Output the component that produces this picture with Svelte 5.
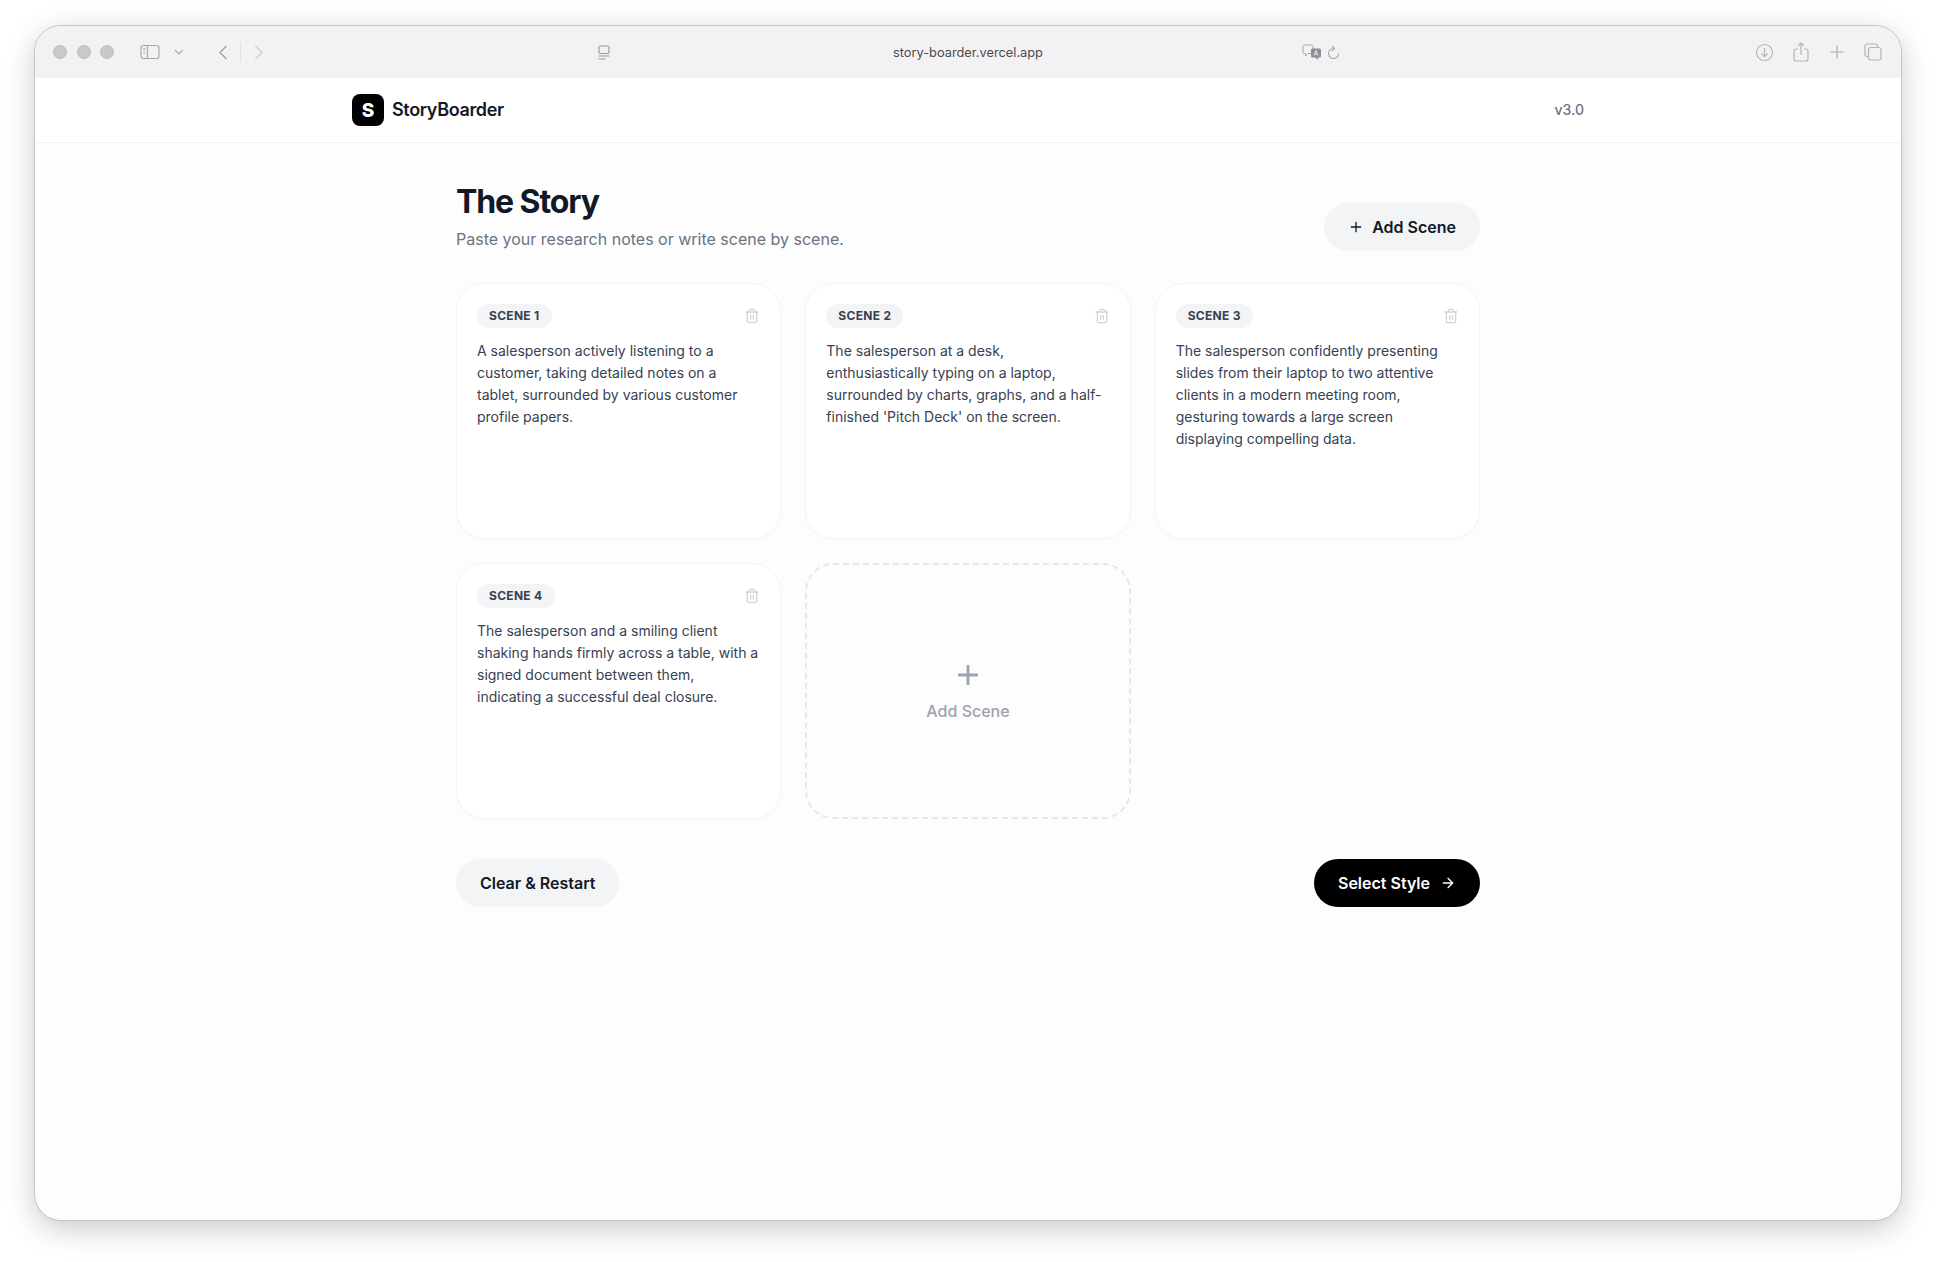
<script>
  const scenes = [
    { n: 1, text: 'A salesperson actively listening to a customer, taking detailed notes on a tablet, surrounded by various customer profile papers.' },
    { n: 2, text: "The salesperson at a desk, enthusiastically typing on a laptop, surrounded by charts, graphs, and a half-finished 'Pitch Deck' on the screen." },
    { n: 3, text: 'The salesperson confidently presenting slides from their laptop to two attentive clients in a modern meeting room, gesturing towards a large screen displaying compelling data.' },
    { n: 4, text: 'The salesperson and a smiling client shaking hands firmly across a table, with a signed document between them, indicating a successful deal closure.' }
  ];
</script>

<div class="screen">
  <div class="window">
    <div class="toolbar">
      <div class="left-tools">
        <div class="lights"><span></span><span></span><span></span></div>
        <svg class="sidebar-icon" width="20" height="16" viewBox="0 0 20 16" fill="none" stroke="#a9a9ac" stroke-width="1.2">
          <rect x="1" y="1.5" width="18" height="13" rx="2.5" />
          <path d="M7.5 1.5v13" />
          <path d="M3.2 4.5h2M3.2 6.8h2M3.2 9.1h2" stroke-width="1" />
        </svg>
        <svg class="chevron" width="10" height="7" viewBox="0 0 10 7" fill="none" stroke="#adadb0" stroke-width="1.2"><path d="M1 1l4 4 4-4" /></svg>
        <svg class="back" width="10" height="15" viewBox="0 0 10 15" fill="none" stroke="#a2a2a5" stroke-width="1.4"><path d="M8.5 1L2 7.5 8.5 14" /></svg>
        <span class="nav-divider"></span>
        <svg class="forward" width="10" height="15" viewBox="0 0 10 15" fill="none" stroke="#cfcfd2" stroke-width="1.4"><path d="M1.5 1L8 7.5 1.5 14" /></svg>
      </div>

      <div class="address">
        <svg width="12" height="15" viewBox="0 0 12 15" fill="none" stroke="#98989b" stroke-width="1.1">
          <rect x="1" y="1" width="10" height="7.5" rx="1.5" />
          <path d="M0.5 11h11M0.5 14h7" />
        </svg>
        <span class="url">story-boarder.vercel.app</span>
        <div class="address-right">
          <svg width="20" height="16" viewBox="0 0 20 16">
            <path d="M2.5 1h7A1.5 1.5 0 0 1 11 2.5V8a1.5 1.5 0 0 1-1.5 1.5H6L3.5 12V9.500h-1A1.500 1.500 0 0 1 1 8V2.500A1.500 1.500 0 0 1 2.500 1z" fill="none" stroke="#a9a9ac" stroke-width="1" />
            <path d="M10.500 4.500h7A1.500 1.500 0 0 1 19 6v6a1.500 1.500 0 0 1-1.500 1.500H16V16l-2.500-2.500h-3A1.500 1.500 0 0 1 9 12V6a1.500 1.500 0 0 1 1.500-1.500z" fill="#8e8e92" />
            <path d="M12 11.500l2-5 2 5M12.800 10h2.400" fill="none" stroke="#f2f2f4" stroke-width="0.9" />
          </svg>
          <svg width="13" height="15" viewBox="0 0 13 15" fill="none" stroke="#a9a9ac" stroke-width="1.1">
            <path d="M6.500 3.500a5 5 0 1 0 5 5" />
            <path d="M5 1l2.500 2.500L5 6" />
          </svg>
        </div>
      </div>

      <div class="right-tools">
        <svg width="19" height="19" viewBox="0 0 19 19" fill="none" stroke="#b4b4b7" stroke-width="1.2">
          <circle cx="9.500" cy="9.500" r="8" />
          <path d="M9.500 5v8.500M6.200 10.300l3.300 3.300 3.300-3.300" />
        </svg>
        <svg class="share" width="16" height="20" viewBox="0 0 16 20" fill="none" stroke="#b4b4b7" stroke-width="1.2">
          <path d="M5 7H3a2 2 0 0 0-2 2v8a2 2 0 0 0 2 2h10a2 2 0 0 0 2-2V9a2 2 0 0 0-2-2h-2" />
          <path d="M8 13V1M5 3.800L8 1l3 2.800" />
        </svg>
        <svg width="14" height="14" viewBox="0 0 14 14" fill="none" stroke="#a9a9ac" stroke-width="1.2"><path d="M7 .5v13M.5 7h13" /></svg>
        <svg width="18" height="18" viewBox="0 0 18 18" fill="none" stroke="#b4b4b7" stroke-width="1.2">
          <path d="M4 13.500H3A2 2 0 0 1 1 11.500V3a2 2 0 0 1 2-2h8.500a2 2 0 0 1 2 2v1" />
          <rect x="4.500" y="4.500" width="12.500" height="12.500" rx="2.500" />
        </svg>
      </div>
    </div>

    <div class="page">
      <header class="app-header">
        <div class="brand">
          <span class="logo">S</span>
          <span class="brand-name">StoryBoarder</span>
        </div>
        <span class="version">v3.0</span>
      </header>

      <main>
        <div class="head">
          <div>
            <h1>The Story</h1>
            <p class="sub">Paste your research notes or write scene by scene.</p>
          </div>
          <button class="btn btn-light" type="button">
            <svg width="16" height="16" viewBox="0 0 24 24" fill="none" stroke="currentColor" stroke-width="2" stroke-linecap="round" stroke-linejoin="round"><path d="M5 12h14M12 5v14" /></svg>
            Add Scene
          </button>
        </div>

        <div class="grid">
          {#each scenes as scene}
            <div class="card">
              <div class="card-top">
                <span class="pill">SCENE {scene.n}</span>
                <svg width="16" height="16" viewBox="0 0 24 24" fill="none" stroke="#d1d5db" stroke-width="2" stroke-linecap="round" stroke-linejoin="round">
                  <path d="M3 6h18M19 6v14c0 1-1 2-2 2H7c-1 0-2-1-2-2V6M8 6V4c0-1 1-2 2-2h4c1 0 2 1 2 2v2M10 11v6M14 11v6" />
                </svg>
              </div>
              <p class="scene-text">{scene.text}</p>
            </div>
          {/each}
          <div class="card-add">
            <svg width="34" height="34" viewBox="0 0 24 24" fill="none" stroke="#9ca3af" stroke-width="2" stroke-linejoin="round"><path d="M5 12h14M12 5v14" /></svg>
            <span>Add Scene</span>
          </div>
        </div>

        <div class="foot">
          <button class="btn btn-light" type="button">Clear &amp; Restart</button>
          <button class="btn btn-dark" type="button">
            Select Style
            <svg width="16" height="16" viewBox="0 0 24 24" fill="none" stroke="currentColor" stroke-width="2" stroke-linecap="round" stroke-linejoin="round"><path d="M5 12h14M12 5l7 7-7 7" /></svg>
          </button>
        </div>
      </main>
    </div>
  </div>
</div>

<style>
  :global(body) {
    margin: 0;
    background: #fff;
    font-family: Inter, "Liberation Sans", sans-serif;
  }

  .screen {
    height: 1262px;
    box-sizing: border-box;
    padding: 26px 35px 42px;
  }

  .window {
    height: 100%;
    display: flex;
    flex-direction: column;
    overflow: hidden;
    border-radius: 26px;
    box-sizing: border-box;
    box-shadow: 0 0 0 1px #c4c4c6, 0 8px 30px rgba(0, 0, 0, 0.22);
    background: #fdfdfd;
  }

  .toolbar {
    height: 52px;
    flex-shrink: 0;
    display: flex;
    align-items: center;
    padding: 0 19px 0 18px;
    background: #f2f2f4;
  }

  .left-tools {
    display: flex;
    align-items: center;
  }

  .lights {
    display: flex;
    gap: 9.5px;
  }

  .lights span {
    width: 14px;
    height: 14px;
    border-radius: 50%;
    background: #c9c9cb;
    box-sizing: border-box;
    border: 1px solid #bebec0;
  }

  .sidebar-icon {
    margin-left: 26px;
  }

  .chevron {
    margin-left: 14px;
  }

  .back {
    margin-left: 34px;
  }

  .nav-divider {
    width: 1px;
    height: 20px;
    margin: 0 13px 0 12px;
    background: #e1e1e3;
  }

  .address {
    width: 742px;
    margin-left: 334px;
    display: flex;
    align-items: center;
    justify-content: space-between;
  }

  .url {
    margin-left: 24px;
    font-size: 12.8px;
    color: #4b4b4f;
  }

  .address-right {
    display: flex;
    align-items: center;
    gap: 5px;
  }

  .right-tools {
    display: flex;
    align-items: center;
    margin-left: auto;
    gap: 20px;
  }

  .share {
    margin: 0 1px 0 -1px;
  }

  .page {
    flex: 1;
    min-height: 0;
  }

  .app-header {
    height: 65px;
    box-sizing: border-box;
    display: flex;
    align-items: center;
    justify-content: space-between;
    padding: 0 317px;
    background: #fff;
    border-bottom: 1px solid #f3f4f6;
  }

  .brand {
    display: flex;
    align-items: center;
    gap: 8px;
  }

  .logo {
    width: 32px;
    height: 32px;
    border-radius: 8px;
    background: #000;
    color: #fff;
    font-size: 19px;
    font-weight: 800;
    display: flex;
    align-items: center;
    justify-content: center;
  }

  .brand-name {
    padding-bottom: 1px;
    font-size: 18px;
    font-weight: 600;
    color: #111827;
    letter-spacing: -0.35px;
  }

  .version {
    padding-bottom: 1px;
    font-size: 14px;
    font-weight: 500;
    color: #6b7280;
  }

  main {
    width: 1024px;
    margin: 0 auto;
    padding-top: 40px;
  }

  .head {
    display: flex;
    align-items: flex-end;
    justify-content: space-between;
    margin-bottom: 32px;
  }

  h1 {
    margin: 1px 0 0;
    font-size: 32px;
    line-height: 36px;
    font-weight: 700;
    color: #111827;
    letter-spacing: -1.1px;
  }

  .sub {
    margin: 7px 0 0;
    font-size: 16px;
    line-height: 24px;
    color: #6b7280;
  }

  .btn {
    height: 48px;
    padding: 0 24px;
    border: none;
    border-radius: 999px;
    display: inline-flex;
    align-items: center;
    gap: 8px;
    font-family: inherit;
    font-size: 16px;
    font-weight: 600;
    cursor: pointer;
  }

  .btn-light {
    background: #f3f4f6;
    color: #111827;
  }

  .btn-dark {
    background: #000;
    color: #fff;
    gap: 10px;
  }

  .grid {
    display: grid;
    grid-template-columns: repeat(3, 1fr);
    gap: 24px;
  }

  .card,
  .card-add {
    height: 256px;
    box-sizing: border-box;
    border-radius: 28px;
  }

  .card {
    padding: 20px;
    background: #fff;
    border: 1px solid #f3f4f6;
    box-shadow: 0 1px 2px rgba(0, 0, 0, 0.02);
  }

  .card-top {
    display: flex;
    align-items: center;
    justify-content: space-between;
    margin-bottom: 8px;
  }

  .pill {
    height: 24px;
    box-sizing: border-box;
    padding: 0 12px 1px;
    display: flex;
    align-items: center;
    border-radius: 999px;
    background: #f3f4f6;
    color: #374151;
    font-size: 12px;
    font-weight: 700;
    letter-spacing: 0.3px;
  }

  .scene-text {
    margin: 0;
    padding-top: 4px;
    font-size: 14px;
    line-height: 22px;
    color: #374151;
  }

  .card-add {
    border: 2px dashed #e5e7eb;
    display: flex;
    flex-direction: column;
    align-items: center;
    justify-content: center;
    gap: 9px;
    padding-bottom: 4px;
    color: #9ca3af;
    font-size: 16px;
    font-weight: 500;
  }

  .foot {
    display: flex;
    justify-content: space-between;
    margin-top: 40px;
  }
</style>
